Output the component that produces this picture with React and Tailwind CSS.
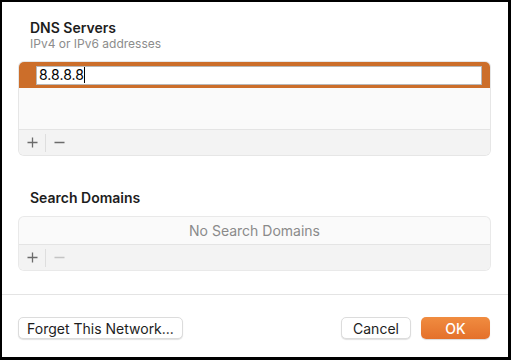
import React from 'react';

function PlusIcon({ color = '#6b6b6b' }) {
  return (
    <svg width="11" height="11" viewBox="0 0 11 11">
      <path d="M5.5 0.5v10M0.5 5.5h10" stroke={color} strokeWidth="1.3" fill="none" />
    </svg>
  );
}

function MinusIcon({ color = '#6b6b6b' }) {
  return (
    <svg width="11" height="11" viewBox="0 0 11 11">
      <path d="M0.5 5.5h10" stroke={color} strokeWidth="1.3" fill="none" />
    </svg>
  );
}

function TableFooter({ minusDisabled }) {
  return (
    <div className="h-[26px] flex items-center border-t border-[#e4e4e4] bg-[#f3f3f3]">
      <div className="w-[26px] h-full flex items-center justify-center">
        <PlusIcon />
      </div>
      <div className="w-px h-[18px] bg-[#dedede]" />
      <div className="w-[26px] h-full flex items-center justify-center">
        <MinusIcon color={minusDisabled ? '#c4c4c4' : '#6b6b6b'} />
      </div>
    </div>
  );
}

export default function App() {
  return (
    <div
      className="w-[511px] h-[360px] bg-black pt-[2px] pl-[2px] pr-[3px] pb-[3px]"
      style={{ fontFamily: 'Inter, "Noto Sans", sans-serif' }}
    >
      <div className="bg-white h-full flex flex-col">
        <div className="px-[17px] pt-[18px] pr-[18px]">
          <div className="ml-[11px] h-[17px] leading-[16px] text-[14px] font-semibold text-[#1d1d1d]">
            DNS Servers
          </div>
          <div className="ml-[11px] h-[14px] leading-[14px] text-[12px] text-[#8c8c8c]">
            IPv4 or IPv6 addresses
          </div>

          <div className="mt-[11px] rounded-[5px] overflow-hidden bg-[#fafafa] shadow-[0_0_0_1px_#e6e6e6]">
            <div className="h-[26px] bg-[#cc6e2a] flex items-center pl-[17px] pr-[8px]">
              <div className="flex-1 h-[19px] bg-white border border-[#b9b9b9] flex items-center pl-[2px]">
                <span className="text-[14px] leading-[16px] text-black">8.8.8.8</span>
                <span className="w-px h-[16px] bg-black" />
              </div>
            </div>
            <div className="h-[41px]" />
            <TableFooter />
          </div>

          <div className="mt-[35px] ml-[11px] h-[16px] leading-[16px] text-[14px] font-semibold text-[#1d1d1d]">
            Search Domains
          </div>

          <div className="mt-[11px] rounded-[5px] overflow-hidden bg-[#fafafa] shadow-[0_0_0_1px_#e9e9e9]">
            <div className="h-[27px] flex items-center justify-center text-[14px] text-[#8a8a8a]">
              No Search Domains
            </div>
            <TableFooter minusDisabled />
          </div>
        </div>

        <div className="mt-[24px] h-px bg-[#e4e4e4]" />

        <div className="pt-[22px] pl-[16px] pr-[18px] flex items-center">
          <button className="h-[22px] w-[165px] rounded-[5px] bg-white border border-[#dcdcdc] shadow-[0_1px_1px_rgba(0,0,0,0.12)] text-[14px] text-[#1d1d1d]">
            Forget This Network...
          </button>
          <div className="flex-1" />
          <button className="h-[22px] w-[70px] rounded-[5px] bg-white border border-[#dcdcdc] shadow-[0_1px_1px_rgba(0,0,0,0.12)] text-[14px] text-[#1d1d1d]">
            Cancel
          </button>
          <button className="ml-[10px] h-[22px] w-[69px] rounded-[5px] bg-gradient-to-b from-[#f08c40] to-[#e4702a] shadow-[0_1px_1px_rgba(0,0,0,0.15)] text-[14px] font-medium text-white">
            OK
          </button>
        </div>
      </div>
    </div>
  );
}
